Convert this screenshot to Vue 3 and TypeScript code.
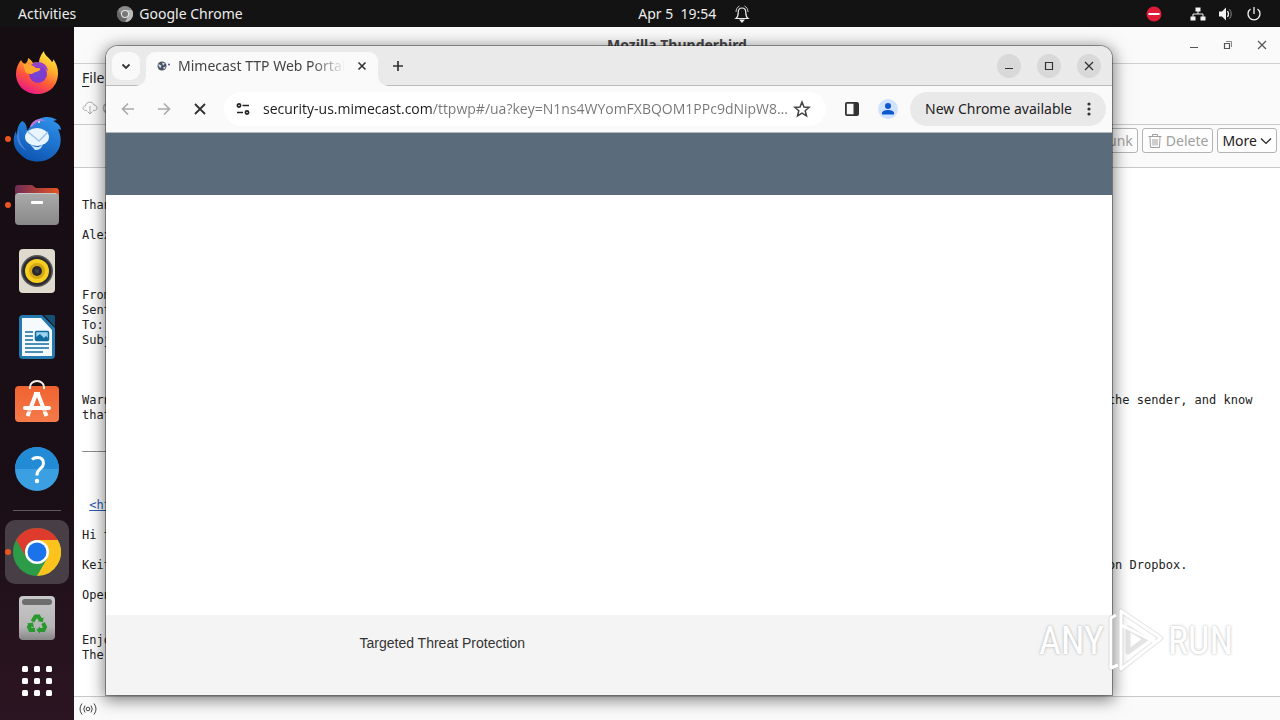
<script setup lang="ts">
import { ref } from 'vue'

interface DockItem {
  id: string
  label: string
  running?: boolean
  active?: boolean
}

const apps: DockItem[] = [
  { id: 'firefox', label: 'Firefox' },
  { id: 'thunderbird', label: 'Thunderbird', running: true },
  { id: 'files', label: 'Files', running: true },
  { id: 'music', label: 'Rhythmbox' },
  { id: 'writer', label: 'Writer' },
  { id: 'software', label: 'Software' },
  { id: 'help', label: 'Help' },
]
const pinned: DockItem[] = [
  { id: 'chrome', label: 'Chrome', running: true, active: true },
  { id: 'trash', label: 'Trash' },
]

const url = ref('security-us.mimecast.com/ttpwp#/ua?key=N1ns4WYomFXBQOM1PPc9dNipW8…')

const column = 142
const before = [
  'Than', '', 'Alex', '', '', '',
  'From', 'Sent', 'To:', 'Subj', '', '', '',
  'Warn'.padEnd(column) + 'the sender, and know',
  'that', '', '_____', '', '', '',
].join('\n')
const after = [
  '', '',
  'Hi t', '',
  'Keit'.padEnd(column) + 'on Dropbox.', '',
  'Open', '', '', 'Enjo', 'The',
].join('\n')
</script>

<template>
  <div class="screen">
    <header class="panel">
      <button class="activities">Activities</button>
      <button class="app-menu">
        <svg width="16" height="16" viewBox="0 0 16 16">
          <circle cx="8" cy="8" r="8" fill="#8b8b8b" />
          <path d="M8 4h7A8 8 0 0 1 8 16L11.500 10z" fill="#b9b9b9" />
          <path d="M1 4A8 8 0 0 0 8 16l2-4-6-3z" fill="#666" />
          <circle cx="8" cy="8" r="4" fill="#e4e4e4" />
          <circle cx="8" cy="8" r="3" fill="#777" />
        </svg>
        <span>Google Chrome</span>
      </button>
      <button class="clock">
        <span>Apr 5&nbsp; 19:54</span>
        <svg width="16" height="18" viewBox="0 0 16 18" fill="none" stroke="#eee" stroke-width="1.200">
          <path d="M2 13.500c2-1.500 2.200-3 2.200-6C4.200 4.500 5.700 3 8 3s3.800 1.500 3.800 4.500c0 3 .2 4.500 2.200 6z" />
          <path d="M2 7c0-3 1.500-5 3.500-6M14 7c0-3-1.500-5-3.500-6" stroke-width=".8" />
          <path d="M6.300 15h3.400L8 17z" fill="#eee" />
        </svg>
      </button>
      <div class="tray">
        <button aria-label="Do not disturb">
          <svg width="16" height="16" viewBox="0 0 16 16"><circle cx="8" cy="8" r="7.500" fill="#e01b38" /><path d="M2.500 8h11" stroke="#fff" stroke-width="2" /></svg>
        </button>
        <button class="status" aria-label="System">
          <svg width="16" height="16" viewBox="0 0 16 16" fill="#f2f2f2"><path d="M5.500 1.500h5v4h-5zM.5 10.500h5v4h-5zM10.500 10.500h5v4h-5z" /><path d="M8 5v3M3 11V8h10v3" fill="none" stroke="#f2f2f2" /></svg>
          <svg width="16" height="16" viewBox="0 0 16 16"><path d="M1 5.500h3l4-4v13l-4-4H1z" fill="#f2f2f2" /><path d="M9.500 5q2 3 0 6" stroke="#f2f2f2" fill="none" stroke-width="1.300" /><path d="M11.500 3.200q3.500 4.800 0 9.600" stroke="#888" fill="none" /></svg>
          <svg width="16" height="16" viewBox="0 0 16 16" fill="none" stroke="#f2f2f2" stroke-width="1.300"><path d="M4.500 3a6 6 0 1 0 7 0M8 1v7" /></svg>
        </button>
      </div>
    </header>

    <div class="workspace">
      <nav class="dock" aria-label="Dock">
        <template v-for="(group, g) in [apps, pinned]" :key="g">
          <hr v-if="g === 1" class="dock-sep">
          <button v-for="item in group" :key="item.id" class="dock-item" :class="{ active: item.active, running: item.running }" :aria-label="item.label">
            <svg v-if="item.id === 'firefox'" width="48" height="48" viewBox="0 0 48 48">
              <defs>
                <linearGradient id="ff" x1=".8" y1="0" x2=".3" y2="1"><stop offset="0" stop-color="#fff044" /><stop offset=".35" stop-color="#ffb02e" /><stop offset=".65" stop-color="#ff5a36" /><stop offset="1" stop-color="#e8168b" /></linearGradient>
                <radialGradient id="ffc"><stop offset="0" stop-color="#6b49d8" /><stop offset="1" stop-color="#8b35c8" /></radialGradient>
              </defs>
              <path d="M8 11c1 2 2 3 4 4 2-2 3-3 3-6 3 2 4 3 5 5 3-1 6 0 6 0 0-5 3-10 5-12 0 4 5 6 8 11 2-1 1-3 1-3 4 5 5 10 5 14C45 37 36 45 24 45S3 36 3 25c0-6 2-10 5-14z" fill="url(#ff)" />
              <circle cx="25" cy="25" r="9" fill="url(#ffc)" />
              <path d="M10 15c6-1 10 1 13 4 3 0 5 0 4 2-2 2-6 2-8 4-3 0-6 0-7-3z" fill="#ffa62e" />
              <path d="M18 16c7-6 16-2 17 6-4-3-7-4-12-4z" fill="#9442c9" />
            </svg>
            <svg v-else-if="item.id === 'thunderbird'" width="48" height="48" viewBox="0 0 48 48">
              <defs><linearGradient id="tb" x1=".7" y1="0" x2=".3" y2="1"><stop offset="0" stop-color="#2f8fe8" /><stop offset="1" stop-color="#0c54b0" /></linearGradient></defs>
              <path d="M9 6c3 1 5 4 5 10l5-7c7-8 18-9 25-4l-4 1c5 2 8 5 8 9-2-1-3-1-3-1 5 10 3 22-6 28-10 7-24 6-32-3C0 33-1 24 3 16c0 2 1 4 1 4 0-6 1-10 5-14z" fill="url(#tb)" />
              <path d="M17 12c1-4 4-7 9-8 4 0 5 1 7 2-8-1-11 2-14 6z" fill="#b777dc" />
              <path d="M6 14c-1 10 1 15 8 22-9-5-12-12-8-22z" fill="#4a86e0" />
              <ellipse cx="24" cy="22" rx="12" ry="9" fill="#e8f5ff" />
              <path d="M14 16l12 10 9-9" stroke="#9fc5ea" stroke-width="1.500" fill="none" />
              <path d="M16 28c5 5 9 5 14 2-2 3-3 5-8 5z" fill="#c6e4fa" />
              <circle cx="26" cy="7" r="1" fill="#e8f5ff" />
            </svg>
            <svg v-else-if="item.id === 'files'" width="48" height="48" viewBox="0 0 48 48">
              <defs><linearGradient id="fi"><stop offset="0" stop-color="#6e2a57" /><stop offset="1" stop-color="#e85420" /></linearGradient><linearGradient id="fg" x2="0" y2="1"><stop offset="0" stop-color="#aaa" /><stop offset="1" stop-color="#898989" /></linearGradient></defs>
              <path d="M5 4h14l4 3h20q3 0 3 4v8H2V7q0-3 3-3z" fill="url(#fi)" />
              <rect x="2" y="12" width="44" height="32" rx="4" fill="url(#fg)" /><path d="M5 12.500h38" stroke="#c9c9c9" /><rect x="18" y="20" width="12" height="3" rx="1" fill="#fff" />
            </svg>
            <svg v-else-if="item.id === 'music'" width="48" height="48" viewBox="0 0 48 48">
              <rect x="6" y="2" width="36" height="44" rx="4" fill="#dedacd" /><circle cx="24" cy="24" r="16" fill="#56565a" /><circle cx="24" cy="24" r="14.500" fill="#2b2b30" /><circle cx="24" cy="24" r="12" fill="#f7ce22" /><circle cx="24" cy="24" r="8" fill="#d6a714" /><circle cx="24" cy="24" r="5" fill="#28292d" /><circle cx="24" cy="24" r="2" fill="#3d3f44" />
            </svg>
            <svg v-else-if="item.id === 'writer'" width="48" height="48" viewBox="0 0 48 48">
              <path d="M10 2h19l13 13v27q0 4-4 4H10q-4 0-4-4V6q0-4 4-4z" fill="#247aae" /><path d="M31 2h9q2 0 2 2v10z" fill="#155074" /><path d="M9 5h19l11 12v26H9z" fill="#f4fafd" />
              <path d="M12 19h8M12 23h8M12 27h8M12 31h24M12 35h24M12 39h18" stroke="#126d9f" stroke-width="1.700" /><rect x="22.500" y="18.500" width="13" height="9" rx="1" fill="#9ad5f1" stroke="#126d9f" stroke-width="1.500" /><path d="M23 27v-3l4-3 4 4 2-2 2 2v2z" fill="#126d9f" />
            </svg>
            <svg v-else-if="item.id === 'software'" width="48" height="48" viewBox="0 0 48 48">
              <defs><linearGradient id="sw" x2="0" y2="1"><stop offset="0" stop-color="#ef6230" /><stop offset="1" stop-color="#f57b4a" /></linearGradient></defs>
              <rect x="2" y="7" width="44" height="36" rx="4" fill="url(#sw)" /><path d="M17 10V8a7 6 0 0 1 14 0v2" fill="none" stroke="#f8f1e5" stroke-width="2" /><path d="M23 15L14.500 37M25 15l8.500 22" stroke="#fff" stroke-width="4" /><path d="M21 13h6v4h-6z" fill="#fff" /><path d="M12 29h24" stroke="#fff" stroke-width="4" stroke-linecap="round" /><path d="M10 32h28" stroke="#f4754a" stroke-width="1" />
            </svg>
            <svg v-else-if="item.id === 'help'" width="48" height="48" viewBox="0 0 48 48">
              <circle cx="24" cy="24" r="22" fill="#3ba0e2" /><path d="M2 24a22 22 0 0 1 44 0z" fill="#238ad5" /><path d="M19 14.500c1.500-1.500 3-2 5.500-2 4 0 6 2.500 6 6 0 5-6.500 5.500-6.500 11v1" stroke="#fff" stroke-width="3" fill="none" /><circle cx="24" cy="36" r="2.200" fill="#fff" />
            </svg>
            <svg v-else-if="item.id === 'chrome'" width="48" height="48" viewBox="0 0 48 48">
              <circle cx="24" cy="24" r="24" fill="#2c9c49" /><path d="M24 12h20.800A24 24 0 0 1 24 48l10.400-18z" fill="#fcc31c" /><path d="M24 0a24 24 0 0 1 20.800 12H24a12 12 0 0 0-10.400 18L3.200 12A24 24 0 0 1 24 0z" fill="#df3a2e" /><circle cx="24" cy="24" r="12" fill="#fff" /><circle cx="24" cy="24" r="9.500" fill="#1a73e8" />
            </svg>
            <svg v-else width="48" height="48" viewBox="0 0 48 48">
              <defs><linearGradient id="tr" x2="0" y2="1"><stop offset="0" stop-color="#c8c8c8" /><stop offset=".7" stop-color="#b6b6b6" /><stop offset="1" stop-color="#868686" /></linearGradient></defs>
              <rect x="6" y="2" width="36" height="44" rx="4" fill="url(#tr)" /><rect x="9" y="5" width="30" height="6" rx="3" fill="#6d6d6d" />
              <g fill="none" stroke="#28992c" stroke-width="4"><path d="M19.500 27.500l3-5h3l2 3.500M30 29l2 4-1.500 3H26M22 36h-4.500L16 33l1.500-3" /></g><path d="M25 27.500l5 .5.500-5zM27 32.500v7L23.500 36zM14 29.500l6-1 1 5.500z" fill="#28992c" />
            </svg>
          </button>
        </template>
        <button class="dock-item grid-btn" aria-label="Show applications">
          <svg width="32" height="32" viewBox="0 0 32 32" fill="#fff"><template v-for="r in 3" :key="r"><rect v-for="c in 3" :key="c" :x="c * 12 - 11" :y="r * 12 - 11" width="6" height="6" rx="1.500" /></template></svg>
        </button>
      </nav>

      <main class="desktop">
        <section class="mail">
          <div class="mail-title">
            <span class="mail-name">Mozilla Thunderbird</span>
            <div class="mail-ctl">
              <button aria-label="Minimize"><svg width="12" height="12" viewBox="0 0 12 12"><path d="M2 8.500h8" stroke="#555" /></svg></button>
              <button aria-label="Restore"><svg width="12" height="12" viewBox="0 0 12 12" fill="none" stroke="#555"><path d="M2.500 4.500h5v5h-5z" stroke-width="1.200" /><path d="M4 2.500h5.500V8" stroke="#888" /></svg></button>
              <button aria-label="Close"><svg width="12" height="12" viewBox="0 0 12 12"><path d="M2 2l8 8M10 2l-8 8" stroke="#555" stroke-width="1.200" /></svg></button>
            </div>
          </div>
          <div class="mail-bars">
            <button class="menu"><u>F</u>ile</button>
            <button class="get"><svg width="16" height="16" viewBox="0 0 16 16" fill="none" stroke="#aaa"><path d="M5 10.500H3.500C0 10 .5 6 3.500 6 4 1 11 1 12 5c4 0 4 5.500.5 5.500H11M8 6v8M5.500 11.500L8 14l2.500-2.500" /></svg><span>G</span></button>
          </div>
          <div class="mail-actions">
            <button class="act dim">Junk</button>
            <button class="act dim"><svg width="16" height="16" viewBox="0 0 16 16" fill="none" stroke="#a0a0a0"><path d="M1.500 3.500h13M5.500 3V1.500h5V3M3 4l.5 10.500h9L13 4M6 6v6.500M8 6v6.500M10 6v6.500" /></svg>Delete</button>
            <button class="act">More<svg width="12" height="12" viewBox="0 0 12 12"><path d="M1 3.500l5 5 5-5" fill="none" stroke="#222" stroke-width="1.200" /></svg></button>
          </div>
          <div class="mail-body"><pre>{{ before }}
 <a href="#">&lt;ht</a>{{ after }}</pre></div>
          <footer class="mail-status">
            <svg width="18" height="14" viewBox="0 0 18 14" fill="none" stroke="#444"><circle cx="9" cy="7" r="1.800" /><path d="M6 3.500q-2.500 3.500 0 7M12 3.500q2.500 3.500 0 7M3 1.500q-4 5.500 0 11M15 1.500q4 5.500 0 11" /></svg>
          </footer>
        </section>

        <section class="browser">
          <div class="tabs">
            <button class="tab-search" aria-label="Search tabs"><svg width="12" height="12" viewBox="0 0 12 12"><path d="M2.500 4.500L6 8l3.500-3.500" fill="none" stroke="#333" stroke-width="1.800" /></svg></button>
            <div class="tab">
              <svg width="14" height="10" viewBox="0 0 14 10"><circle cx="5" cy="5" r="4.500" fill="#4b5263" /><path d="M1.500 3l3 1.500L3.500 7 1.500 5zM5 1.500l3 1-2 2zM6 6.500l3-1-2 3z" fill="#d2e0ef" /><circle cx="12" cy="3.500" r="1" fill="#53489b" /></svg>
              <span class="tab-title">Mimecast TTP Web Portal</span>
              <button aria-label="Close tab"><svg width="12" height="12" viewBox="0 0 12 12"><path d="M2.500 2.500l7 7M9.500 2.500l-7 7" stroke="#333" stroke-width="1.600" /></svg></button>
            </div>
            <button class="new-tab" aria-label="New tab"><svg width="14" height="14" viewBox="0 0 14 14"><path d="M7 2v10M2 7h10" stroke="#333" stroke-width="1.700" /></svg></button>
            <div class="win-ctl">
              <button aria-label="Minimize"><svg width="12" height="12" viewBox="0 0 12 12"><path d="M2 8.500h8" stroke="#333" /></svg></button>
              <button aria-label="Maximize"><svg width="12" height="12" viewBox="0 0 12 12"><path d="M2.500 2.500h7v7h-7z" fill="none" stroke="#333" stroke-width="1.200" /></svg></button>
              <button aria-label="Close"><svg width="12" height="12" viewBox="0 0 12 12"><path d="M2 2l8 8M10 2l-8 8" stroke="#333" stroke-width="1.300" /></svg></button>
            </div>
          </div>
          <div class="toolbar">
            <button class="nav" aria-label="Back"><svg width="16" height="16" viewBox="0 0 16 16" fill="none" stroke="#aaa" stroke-width="1.600"><path d="M14 8H3M8 2.500L2.500 8 8 13.500" /></svg></button>
            <button class="nav" aria-label="Forward"><svg width="16" height="16" viewBox="0 0 16 16" fill="none" stroke="#aaa" stroke-width="1.600"><path d="M2 8h11M8 2.500L13.500 8 8 13.500" /></svg></button>
            <button class="nav" aria-label="Stop"><svg width="16" height="16" viewBox="0 0 16 16"><path d="M3 3l10 10M13 3L3 13" stroke="#333" stroke-width="1.900" /></svg></button>
            <div class="omnibox">
              <button class="site" aria-label="Site information"><svg width="16" height="16" viewBox="0 0 16 16" fill="none" stroke="#222" stroke-width="1.700"><circle cx="4" cy="4.500" r="1.600" /><path d="M7.500 4.500H14M2 11.500h6" /><circle cx="12" cy="11.500" r="1.600" /></svg></button>
              <input v-model="url" class="url" type="text" aria-label="Address">
              <button aria-label="Bookmark"><svg width="18" height="18" viewBox="0 0 18 18"><path d="M9 2l2 5 5.200.4-4 3.400 1.300 5.200L9 13.200 4.500 16l1.300-5.200-4-3.400L7 7z" fill="none" stroke="#444" stroke-width="1.500" /></svg></button>
            </div>
            <button class="nav" aria-label="Side panel"><svg width="16" height="16" viewBox="0 0 16 16"><rect x="1.900" y="1.900" width="12.200" height="12.200" rx="1" fill="none" stroke="#333" stroke-width="1.800" /><path d="M9.500 2H14v12H9.500z" fill="#333" /></svg></button>
            <button class="nav" aria-label="Profile"><svg width="20" height="20" viewBox="0 0 20 20"><circle cx="10" cy="10" r="10" fill="#d1e2fc" /><circle cx="10" cy="7" r="3" fill="#0b57d0" /><path d="M4 15.500v-1.500c0-4 12-4 12 0v1.500z" fill="#0b57d0" /></svg></button>
            <button class="update"><span>New Chrome available</span><svg width="4" height="16" viewBox="0 0 4 16" fill="#333"><circle cx="2" cy="3" r="1.600" /><circle cx="2" cy="8" r="1.600" /><circle cx="2" cy="13" r="1.600" /></svg></button>
          </div>
          <div class="banner"></div>
          <div class="page"></div>
          <footer class="page-foot">Targeted Threat Protection</footer>
        </section>

        <div class="watermark">
          <span>ANY</span>
          <svg width="56" height="66" viewBox="0 0 56 66" fill="none" stroke-linejoin="round">
            <g stroke="#bbb" stroke-width="5" opacity=".4"><path d="M10 57l-7 3V10l5-3M13 3l40 27-40 31zM20 20l18 11-18 13z" /></g>
            <g stroke="#fff" stroke-width="3"><path d="M10 57l-7 3V10l5-3M13 3l40 27-40 31zM13 17l34 17" /></g>
          </svg>
          <span>RUN</span>
        </div>
      </main>
    </div>
  </div>
</template>

<style>
body {
  margin: 0;
}
</style>

<style scoped>
.screen {
  display: flex;
  flex-direction: column;
  height: 100vh;
  overflow: hidden;
  font-family: "Noto Sans", "Open Sans", sans-serif;
  font-size: 14px;
  line-height: 20px;
  color: #222;
}
* {
  box-sizing: border-box;
}
svg {
  display: block;
  flex: none;
}
button {
  display: flex;
  align-items: center;
  justify-content: center;
  padding: 0;
  border: 0;
  background: none;
  font: inherit;
  color: inherit;
  white-space: nowrap;
}
.panel {
  display: grid;
  grid-template-columns: auto auto 1fr auto;
  align-items: center;
  height: 27px;
  flex: none;
  padding: 0 18px;
  background: #131313;
  color: #ececec;
}
.app-menu {
  gap: 6px;
  margin-left: 41px;
}
.clock {
  gap: 18px;
  justify-self: center;
}
.tray {
  display: flex;
  gap: 28px;
}
.status {
  gap: 12px;
}
.workspace {
  display: flex;
  flex: 1;
  min-height: 0;
}
.dock {
  display: flex;
  flex-direction: column;
  align-items: center;
  gap: 2px;
  width: 74px;
  flex: none;
  padding-top: 14px;
  background: linear-gradient(#160d13 0, #190e15 65%, #2c1522 100%);
}
.dock-item {
  position: relative;
  width: 64px;
  height: 64px;
  flex: none;
  border-radius: 10px;
}
.dock-item.active {
  background: #483f46;
}
.dock-item.running::before {
  content: "";
  position: absolute;
  left: 0;
  top: 29px;
  width: 6px;
  height: 6px;
  border-radius: 50%;
  background: #e95420;
}
.dock-item.grid-btn {
  height: 58px;
}
.dock-sep {
  width: 48px;
  height: 1px;
  flex: none;
  margin: 7px 0;
  border: 0;
  background: #5d565b;
}
.desktop {
  position: relative;
  display: flex;
  flex: 1;
  min-width: 0;
  overflow: hidden;
}
.mail {
  display: flex;
  flex-direction: column;
  flex: 1;
  min-width: 0;
  background: #fff;
}
.mail-title {
  display: grid;
  grid-template-columns: 1fr auto 1fr;
  align-items: center;
  height: 37px;
  flex: none;
  border-bottom: 1px solid #cfcfcf;
  background: #fafafa;
}
.mail-name {
  grid-column: 2;
  font-weight: 700;
  color: #484848;
}
.mail-ctl {
  display: flex;
  gap: 22px;
  justify-self: end;
  margin-right: 12px;
}
.mail-bars {
  height: 61px;
  flex: none;
  padding: 4px 8px;
  border-bottom: 1px solid #c9c9c9;
  background: #fafafa;
}
.menu u {
  text-underline-offset: 3px;
}
.get {
  gap: 4px;
  margin-top: 10px;
  color: #aaa;
}
.mail-actions {
  display: flex;
  justify-content: flex-end;
  gap: 4px;
  height: 43px;
  flex: none;
  padding: 3px 3px 0;
  border-bottom: 1px solid #c9c9c9;
  background: #fafafa;
}
.act {
  gap: 3px;
  height: 25px;
  padding: 0 4px;
  border: 1px solid #b4b4b4;
  border-radius: 3px;
  background: #fdfdfd;
}
.act.dim {
  color: #a0a0a0;
}
.mail-body {
  flex: 1;
  min-height: 0;
  overflow: hidden;
  padding: 30px 8px 0;
}
.mail-body pre {
  margin: 0;
  font: 12px/15px "DejaVu Sans Mono", monospace;
}
.mail-body a {
  color: #2a5db0;
}
.mail-status {
  display: flex;
  align-items: center;
  height: 24px;
  flex: none;
  padding: 0 5px;
  border-top: 1px solid #c9c9c9;
  background: #fafafa;
}
.browser {
  position: absolute;
  inset: 19px 168px 25px 32px;
  display: flex;
  flex-direction: column;
  overflow: hidden;
  border-radius: 12px 12px 0 0;
  background: #fff;
  box-shadow: 0 0 0 1px rgba(0, 0, 0, 0.35), 0 3px 16px 2px rgba(0, 0, 0, 0.5);
}
.tabs {
  display: flex;
  align-items: center;
  height: 40px;
  flex: none;
  padding: 0 11px 0 6px;
  border-bottom: 1px solid #bcbcbc;
  background: #eaeaea;
}
.tab-search {
  width: 28px;
  height: 28px;
  border-radius: 9px;
  background: #f9f9f9;
}
.tab {
  position: relative;
  display: flex;
  align-items: center;
  align-self: flex-end;
  gap: 7px;
  width: 232px;
  height: 34px;
  margin: 0 0 -1px 6px;
  padding: 0 10px 6px 11px;
  border-radius: 9px 9px 0 0;
  background: #fafafa;
}
.tab::before,
.tab::after {
  content: "";
  position: absolute;
  bottom: 0;
  width: 9px;
  height: 9px;
}
.tab::before {
  right: 100%;
  background: radial-gradient(circle at 0 0, transparent 8px, #fafafa 9px);
}
.tab::after {
  left: 100%;
  background: radial-gradient(circle at 100% 0, transparent 8px, #fafafa 9px);
}
.tab-title {
  flex: 1;
  min-width: 0;
  margin-right: 4px;
  overflow: hidden;
  white-space: nowrap;
  color: #444;
  mask-image: linear-gradient(90deg, #000 80%, transparent 100%);
}
.new-tab {
  margin-left: 13px;
}
.win-ctl {
  display: flex;
  gap: 16px;
  margin-left: auto;
}
.win-ctl button {
  width: 24px;
  height: 24px;
  border-radius: 50%;
  background: #d9d9d9;
}
.toolbar {
  display: flex;
  align-items: center;
  height: 47px;
  flex: none;
  padding: 0 6px 0 4px;
  border-bottom: 1px solid #b4b9bd;
  background: #fafafa;
}
.nav {
  width: 36px;
  height: 32px;
}
.omnibox {
  display: flex;
  align-items: center;
  flex: 1;
  min-width: 0;
  height: 34px;
  margin: 0 8px 0 6px;
  padding: 0 15px 0 6px;
  border-radius: 17px;
  background: #fff;
}
.site {
  width: 26px;
  height: 26px;
}
.url {
  flex: 1;
  min-width: 0;
  height: 24px;
  margin: 0 0 0 7px;
  padding: 0 0 2px;
  border: 0;
  outline: 0;
  background: linear-gradient(90deg, #1b1b1b 169px, #757575 169px) text;
  font-family: "Open Sans", sans-serif;
  font-size: 14px;
  line-height: 20px;
  color: transparent;
}
.update {
  justify-content: space-between;
  width: 196px;
  height: 34px;
  margin-left: 4px;
  padding: 0 15px;
  border-radius: 17px;
  background: #e9e9e9;
}
.banner {
  height: 62px;
  flex: none;
  background: #5a6b7c;
}
.page {
  flex: 1;
}
.page-foot {
  height: 80px;
  flex: none;
  padding: 18px 0 0 calc(25% + 2px);
  background: #f4f4f4;
  font-family: "Liberation Sans", Arial, sans-serif;
  color: #333;
}
.watermark {
  position: absolute;
  right: 47px;
  bottom: 46px;
  display: flex;
  align-items: center;
  gap: 4px;
  font: 38px/40px "Liberation Sans Narrow", "Roboto Condensed", Roboto, sans-serif;
  color: #fff;
  text-shadow: 0 0 3px rgba(0, 0, 0, 0.3);
  pointer-events: none;
}
</style>
